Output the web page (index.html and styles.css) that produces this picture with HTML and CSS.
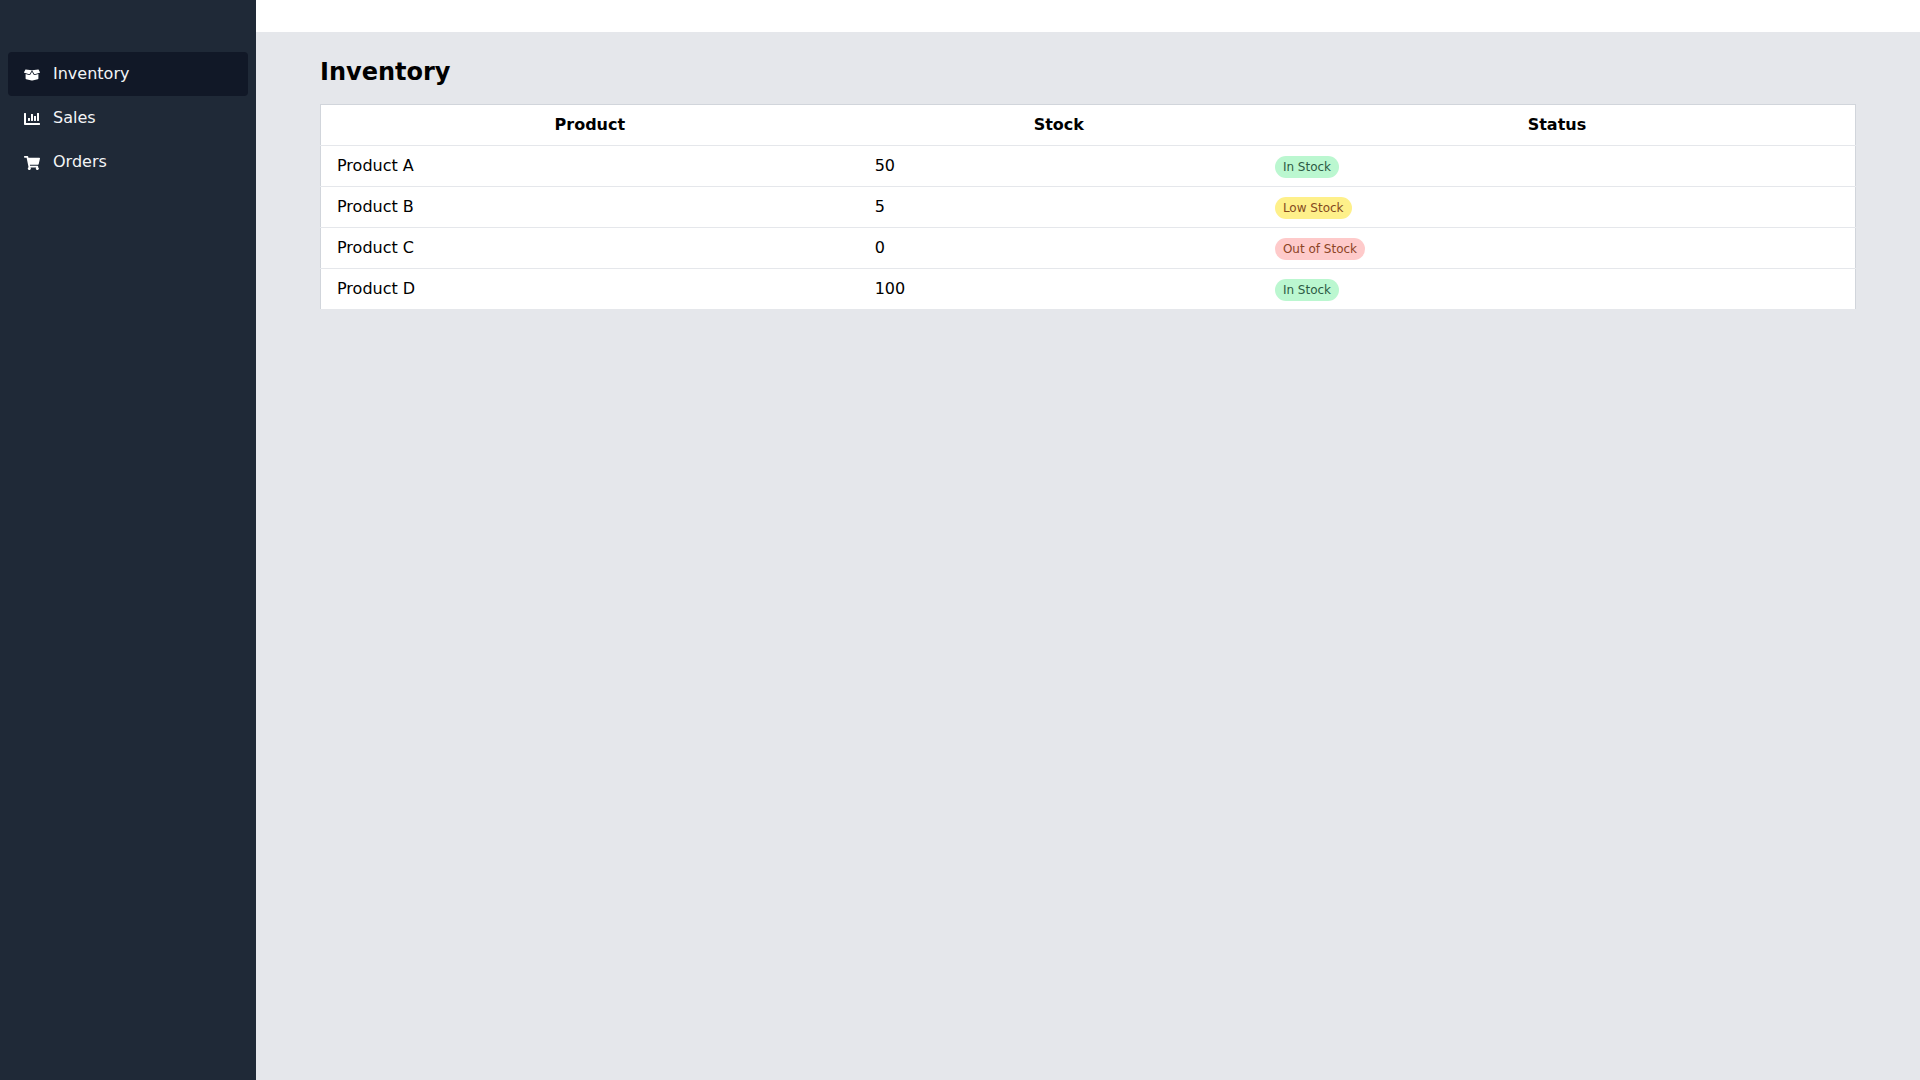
FILE: index.html
```html
<!DOCTYPE html>
<html lang="en">
<head>
<meta charset="utf-8">
<title>Inventory</title>
<link rel="stylesheet" href="styles.css">
</head>
<body>
<div class="app">
  <aside class="sidebar">
    <nav class="nav">
      <a class="nav-item active" href="#">
        <svg class="nav-icon" viewBox="0 0 640 512"><path d="M425.7 256c-16.9 0-32.8-9-41.4-23.4L320 126l-64.2 106.6c-8.7 14.5-24.6 23.5-41.5 23.5-4.5 0-9-.6-13.3-1.9L64 215v178c0 14.7 10 27.5 24.2 31l216.2 54.1c10.2 2.5 20.9 2.5 31 0L551.8 424c14.2-3.6 24.2-16.4 24.2-31V215l-137 39.1c-4.3 1.3-8.8 1.9-13.3 1.9zm212.6-112.2L586.8 41c-3.1-6.2-9.8-9.8-16.7-8.9L320 64l91.7 152.1c3.8 6.3 11.4 9.3 18.5 7.3l197.9-56.5c9.9-2.9 14.7-13.9 10.2-23.1zM53.2 41L1.7 143.8c-4.6 9.2.3 20.2 10.1 23l197.9 56.5c7.1 2 14.7-1 18.5-7.3L320 64 69.8 32.1c-6.9-.8-13.5 2.7-16.6 8.9z"/></svg>
        <span>Inventory</span>
      </a>
      <a class="nav-item" href="#">
        <svg class="nav-icon" viewBox="0 0 512 512"><path d="M332.8 320h38.4c6.4 0 12.8-6.4 12.8-12.8V172.8c0-6.4-6.4-12.8-12.8-12.8h-38.4c-6.4 0-12.8 6.4-12.8 12.8v134.4c0 6.4 6.4 12.8 12.8 12.8zm96 0h38.4c6.4 0 12.8-6.4 12.8-12.8V76.8c0-6.4-6.4-12.8-12.8-12.8h-38.4c-6.4 0-12.8 6.4-12.8 12.8v230.4c0 6.4 6.4 12.8 12.8 12.8zm-288 0h38.4c6.4 0 12.8-6.4 12.8-12.8v-70.4c0-6.4-6.4-12.8-12.8-12.8h-38.4c-6.4 0-12.8 6.4-12.8 12.8v70.4c0 6.4 6.4 12.8 12.8 12.8zm96 0h38.4c6.4 0 12.8-6.4 12.8-12.8V108.8c0-6.4-6.4-12.8-12.8-12.8h-38.4c-6.4 0-12.8 6.4-12.8 12.8v198.4c0 6.4 6.4 12.8 12.8 12.8zM496 384H64V80c0-8.84-7.16-16-16-16H16C7.16 64 0 71.16 0 80v336c0 17.67 14.33 32 32 32h464c8.84 0 16-7.16 16-16v-32c0-8.84-7.16-16-16-16z"/></svg>
        <span>Sales</span>
      </a>
      <a class="nav-item" href="#">
        <svg class="nav-icon" viewBox="0 0 576 512"><path d="M528.12 301.319l47.273-208C578.806 78.301 567.391 64 551.99 64H159.208l-9.166-44.81C147.758 8.021 137.93 0 126.529 0H24C10.745 0 0 10.745 0 24v16c0 13.255 10.745 24 24 24h69.883l70.248 343.435C147.325 417.1 136 435.222 136 456c0 30.928 25.072 56 56 56s56-25.072 56-56c0-15.674-6.447-29.835-16.824-40h209.647C430.447 426.165 424 440.326 424 456c0 30.928 25.072 56 56 56s56-25.072 56-56c0-22.172-12.888-41.332-31.579-50.405l5.517-24.276c3.413-15.018-8.002-29.319-23.403-29.319H218.117l-6.545-32h293.145c11.206 0 20.92-7.754 23.403-18.681z"/></svg>
        <span>Orders</span>
      </a>
    </nav>
  </aside>
  <div class="content">
    <header class="topbar"></header>
    <main class="main">
      <h1 class="title">Inventory</h1>
      <table class="table">
        <thead>
          <tr><th>Product</th><th>Stock</th><th>Status</th></tr>
        </thead>
        <tbody>
          <tr><td>Product A</td><td>50</td><td><span class="badge badge-green">In Stock</span></td></tr>
          <tr><td>Product B</td><td>5</td><td><span class="badge badge-yellow">Low Stock</span></td></tr>
          <tr><td>Product C</td><td>0</td><td><span class="badge badge-red">Out of Stock</span></td></tr>
          <tr><td>Product D</td><td>100</td><td><span class="badge badge-green">In Stock</span></td></tr>
        </tbody>
      </table>
    </main>
  </div>
</div>
</body>
</html>
```

FILE: styles.css
```css
* { box-sizing: border-box; }
html, body { margin: 0; height: 100%; }
body {
  font-family: "DejaVu Sans", sans-serif;
  font-size: 16px;
  line-height: 1.5;
  color: #000;
  background: #e5e7eb;
}
.app { display: flex; height: 100vh; }
.sidebar { width: 256px; flex: none; background: #1f2937; padding: 52px 8px 0; }
.nav { display: flex; flex-direction: column; }
.nav-item {
  display: flex;
  align-items: center;
  gap: 13px;
  height: 44px;
  padding: 0 16px;
  border-radius: 4px;
  color: #f3f4f6;
  text-decoration: none;
}
.nav-item.active { background: #111827; }
.nav-icon { width: 16px; height: 16px; flex: none; fill: #fff; margin-top: 2px; }
.content { flex: 1; min-width: 0; display: flex; flex-direction: column; }
.topbar { height: 32px; flex: none; background: #fff; }
.main { flex: 1; padding: 24px 64px; }
.title { margin: 0 0 16px; font-size: 24px; line-height: 32px; font-weight: 700; }
.table { width: 100%; border-collapse: collapse; background: #fff; border: 1px solid #d1d5db; }
.table th, .table td { padding: 8px 16px; border-bottom: 1px solid #e5e7eb; }
.table th { text-align: center; font-weight: 700; }
.table td { text-align: left; }
.badge {
  display: inline-block;
  padding: 2px 8px;
  border-radius: 9999px;
  font-size: 12px;
  line-height: 18px;
}
.badge-green { background: #bbf7d0; color: #2d5a44; }
.badge-yellow { background: #fef08a; color: #854a1e; }
.badge-red { background: #fecaca; color: #8c4425; }
```
